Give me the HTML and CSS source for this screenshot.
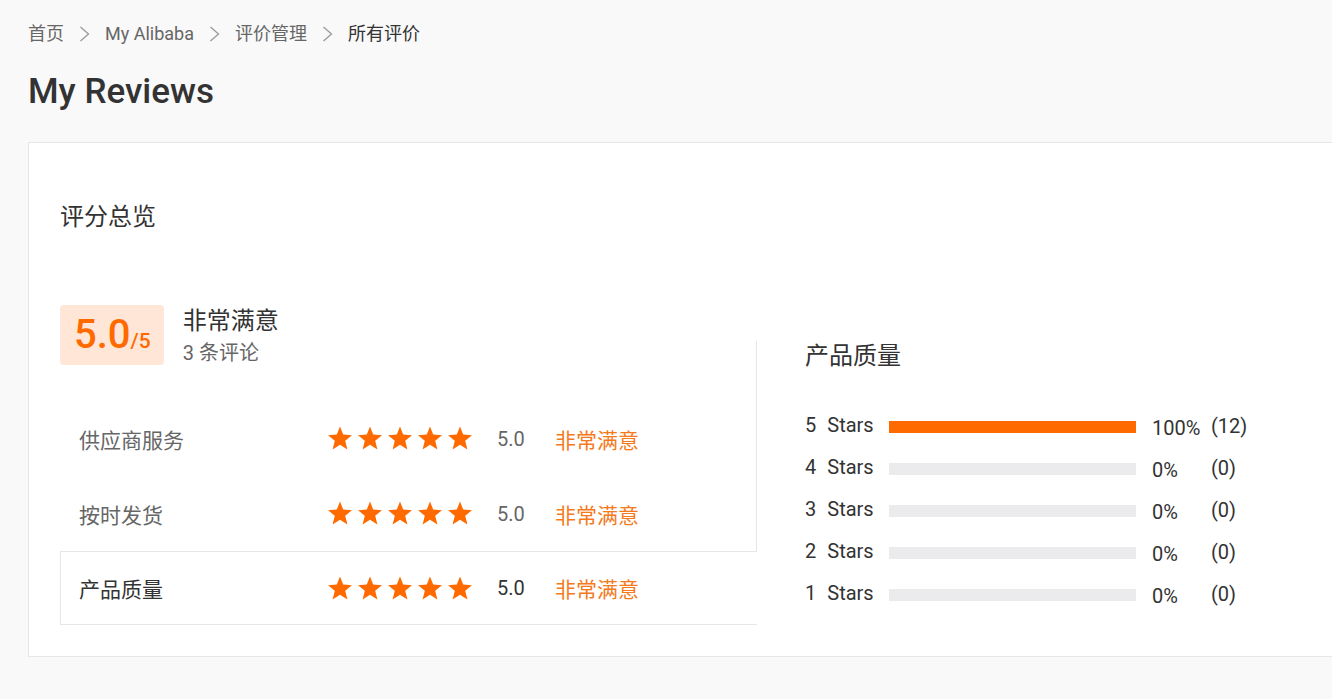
FILE: index.html
```html
<!DOCTYPE html>
<html lang="zh">
<head>
<meta charset="utf-8">
<title>My Reviews</title>
<link rel="stylesheet" href="styles.css">
</head>
<body>
<div class="page">
  <nav class="crumbs">
    <span class="crumb">首页</span>
    <svg class="sep" viewBox="0 0 11 16" width="11" height="16"><path d="M1.5 1 L9.5 8 L1.5 15" fill="none" stroke="#999" stroke-width="1.3"/></svg>
    <span class="crumb">My Alibaba</span>
    <svg class="sep" viewBox="0 0 11 16" width="11" height="16"><path d="M1.5 1 L9.5 8 L1.5 15" fill="none" stroke="#999" stroke-width="1.3"/></svg>
    <span class="crumb">评价管理</span>
    <svg class="sep" viewBox="0 0 11 16" width="11" height="16"><path d="M1.5 1 L9.5 8 L1.5 15" fill="none" stroke="#999" stroke-width="1.3"/></svg>
    <span class="crumb current">所有评价</span>
  </nav>
  <h1 class="title">My Reviews</h1>

  <section class="card">
    <h2 class="card-title">评分总览</h2>

    <div class="summary">
      <div class="score-box"><span class="score">5.0</span><span class="of">/5</span></div>
      <div class="summary-text">
        <div class="summary-label">非常满意</div>
        <div class="summary-count">3 条评论</div>
      </div>
    </div>

    <div class="detail">
      <div class="tabs">
        <div class="tab">
          <span class="tab-label">供应商服务</span>
          <span class="stars">
            <svg viewBox="0 0 26 25"><polygon points="13,0.5 16.2,8.6 25,9.2 18.2,14.8 20.4,23.6 13,18.8 5.6,23.6 7.8,14.8 1,9.2 9.8,8.6"/></svg>
            <svg viewBox="0 0 26 25"><polygon points="13,0.5 16.2,8.6 25,9.2 18.2,14.8 20.4,23.6 13,18.8 5.6,23.6 7.8,14.8 1,9.2 9.8,8.6"/></svg>
            <svg viewBox="0 0 26 25"><polygon points="13,0.5 16.2,8.6 25,9.2 18.2,14.8 20.4,23.6 13,18.8 5.6,23.6 7.8,14.8 1,9.2 9.8,8.6"/></svg>
            <svg viewBox="0 0 26 25"><polygon points="13,0.5 16.2,8.6 25,9.2 18.2,14.8 20.4,23.6 13,18.8 5.6,23.6 7.8,14.8 1,9.2 9.8,8.6"/></svg>
            <svg viewBox="0 0 26 25"><polygon points="13,0.5 16.2,8.6 25,9.2 18.2,14.8 20.4,23.6 13,18.8 5.6,23.6 7.8,14.8 1,9.2 9.8,8.6"/></svg>
          </span>
          <span class="tab-score">5.0</span>
          <span class="tab-verdict">非常满意</span>
        </div>
        <div class="tab">
          <span class="tab-label">按时发货</span>
          <span class="stars">
            <svg viewBox="0 0 26 25"><polygon points="13,0.5 16.2,8.6 25,9.2 18.2,14.8 20.4,23.6 13,18.8 5.6,23.6 7.8,14.8 1,9.2 9.8,8.6"/></svg>
            <svg viewBox="0 0 26 25"><polygon points="13,0.5 16.2,8.6 25,9.2 18.2,14.8 20.4,23.6 13,18.8 5.6,23.6 7.8,14.8 1,9.2 9.8,8.6"/></svg>
            <svg viewBox="0 0 26 25"><polygon points="13,0.5 16.2,8.6 25,9.2 18.2,14.8 20.4,23.6 13,18.8 5.6,23.6 7.8,14.8 1,9.2 9.8,8.6"/></svg>
            <svg viewBox="0 0 26 25"><polygon points="13,0.5 16.2,8.6 25,9.2 18.2,14.8 20.4,23.6 13,18.8 5.6,23.6 7.8,14.8 1,9.2 9.8,8.6"/></svg>
            <svg viewBox="0 0 26 25"><polygon points="13,0.5 16.2,8.6 25,9.2 18.2,14.8 20.4,23.6 13,18.8 5.6,23.6 7.8,14.8 1,9.2 9.8,8.6"/></svg>
          </span>
          <span class="tab-score">5.0</span>
          <span class="tab-verdict">非常满意</span>
        </div>
        <div class="tab active">
          <span class="tab-label">产品质量</span>
          <span class="stars">
            <svg viewBox="0 0 26 25"><polygon points="13,0.5 16.2,8.6 25,9.2 18.2,14.8 20.4,23.6 13,18.8 5.6,23.6 7.8,14.8 1,9.2 9.8,8.6"/></svg>
            <svg viewBox="0 0 26 25"><polygon points="13,0.5 16.2,8.6 25,9.2 18.2,14.8 20.4,23.6 13,18.8 5.6,23.6 7.8,14.8 1,9.2 9.8,8.6"/></svg>
            <svg viewBox="0 0 26 25"><polygon points="13,0.5 16.2,8.6 25,9.2 18.2,14.8 20.4,23.6 13,18.8 5.6,23.6 7.8,14.8 1,9.2 9.8,8.6"/></svg>
            <svg viewBox="0 0 26 25"><polygon points="13,0.5 16.2,8.6 25,9.2 18.2,14.8 20.4,23.6 13,18.8 5.6,23.6 7.8,14.8 1,9.2 9.8,8.6"/></svg>
            <svg viewBox="0 0 26 25"><polygon points="13,0.5 16.2,8.6 25,9.2 18.2,14.8 20.4,23.6 13,18.8 5.6,23.6 7.8,14.8 1,9.2 9.8,8.6"/></svg>
          </span>
          <span class="tab-score">5.0</span>
          <span class="tab-verdict">非常满意</span>
        </div>
      </div>

      <div class="panel">
        <h3 class="panel-title">产品质量</h3>
        <div class="dist">
          <div class="dist-row">
            <span class="dist-label">5<span class="dist-word">Stars</span></span>
            <span class="bar"><span class="bar-fill" style="width:100%"></span></span>
            <span class="dist-pct">100%</span>
            <span class="dist-count">(12)</span>
          </div>
          <div class="dist-row">
            <span class="dist-label">4<span class="dist-word">Stars</span></span>
            <span class="bar"><span class="bar-fill" style="width:0%"></span></span>
            <span class="dist-pct">0%</span>
            <span class="dist-count">(0)</span>
          </div>
          <div class="dist-row">
            <span class="dist-label">3<span class="dist-word">Stars</span></span>
            <span class="bar"><span class="bar-fill" style="width:0%"></span></span>
            <span class="dist-pct">0%</span>
            <span class="dist-count">(0)</span>
          </div>
          <div class="dist-row">
            <span class="dist-label">2<span class="dist-word">Stars</span></span>
            <span class="bar"><span class="bar-fill" style="width:0%"></span></span>
            <span class="dist-pct">0%</span>
            <span class="dist-count">(0)</span>
          </div>
          <div class="dist-row">
            <span class="dist-label">1<span class="dist-word">Stars</span></span>
            <span class="bar"><span class="bar-fill" style="width:0%"></span></span>
            <span class="dist-pct">0%</span>
            <span class="dist-count">(0)</span>
          </div>
        </div>
      </div>
    </div>
  </section>
</div>
</body>
</html>
```

FILE: styles.css
```css
html, body {
  margin: 0;
  padding: 0;
  background: #f9f9f9;
  overflow: hidden;
}
body {
  font-family: Roboto, "Noto Sans CJK SC", "Noto Sans", sans-serif;
  color: #333;
}
.page {
  padding: 22px 0 0 28px;
}
.crumbs {
  display: flex;
  align-items: center;
  height: 24px;
  font-size: 18px;
  line-height: 24px;
  color: #666;
}
.crumb.current {
  color: #333;
}
.sep {
  display: block;
  margin: 0 15px;
}
.title {
  margin: 24px 0 0;
  font-size: 35px;
  line-height: 44px;
  font-weight: 500;
  color: #333;
}
.card {
  margin-top: 28px;
  width: 1340px;
  box-sizing: border-box;
  background: #fff;
  border: 1px solid #e6e6e6;
  padding: 60px 0 31px 31px;
}
.card-title {
  margin: 0;
  font-size: 24px;
  line-height: 28px;
  font-weight: 400;
  color: #333;
}
.summary {
  display: flex;
  align-items: flex-start;
  height: 60px;
  margin-top: 74px;
  position: relative;
  z-index: 1;
}
.score-box {
  display: flex;
  align-items: baseline;
  height: 60px;
  box-sizing: border-box;
  padding: 5px 13px 0 14px;
  background: #ffe6d6;
  border-radius: 4px;
  color: #ff6a00;
  font-weight: 500;
}
.score {
  font-size: 40px;
  line-height: 50px;
}
.of {
  font-size: 21px;
}
.summary-text {
  margin-left: 19px;
}
.summary-label {
  font-size: 24px;
  line-height: 32px;
  color: #333;
}
.summary-count {
  font-size: 20px;
  line-height: 32px;
  color: #666;
}
.detail {
  display: flex;
  margin-top: -24px;
}
.tabs {
  width: 697px;
  box-sizing: border-box;
  padding-top: 60px;
  border-right: 1px solid #e6e6e6;
}
.tab {
  display: flex;
  align-items: center;
  height: 75px;
  padding-left: 19px;
  color: #666;
}
.tab.active {
  height: 74px;
  box-sizing: border-box;
  padding-left: 18px;
  margin-right: -1px;
  background: #fff;
  border: 1px solid #e6e6e6;
  border-right: none;
  color: #333;
}
.tab-label {
  width: 248px;
  font-size: 21px;
}
.stars {
  display: flex;
  gap: 4px;
  width: 170px;
}
.stars svg {
  width: 26px;
  height: 25px;
  fill: #ff6a00;
}
.tab-score {
  width: 58px;
  font-size: 20px;
}
.tab-verdict {
  font-size: 21px;
  color: #f47a1c;
}
.panel {
  padding-left: 48px;
  flex: 1;
}
.panel-title {
  margin: 0;
  font-size: 24px;
  line-height: 30px;
  font-weight: 400;
  color: #333;
}
.dist {
  margin-top: 35px;
}
.dist-row {
  display: flex;
  align-items: center;
  height: 42px;
  font-size: 20px;
  color: #333;
}
.dist-label {
  width: 84px;
  padding-bottom: 5px;
}
.dist-word {
  margin-left: 11px;
}
.bar {
  display: block;
  width: 247px;
  height: 12px;
  background: #ebebee;
}
.bar-fill {
  display: block;
  height: 100%;
  background: #ff6a00;
}
.dist-pct {
  width: 59px;
  margin-left: 16px;
  padding-top: 2px;
}
.dist-count {
  padding-bottom: 2px;
}
```
